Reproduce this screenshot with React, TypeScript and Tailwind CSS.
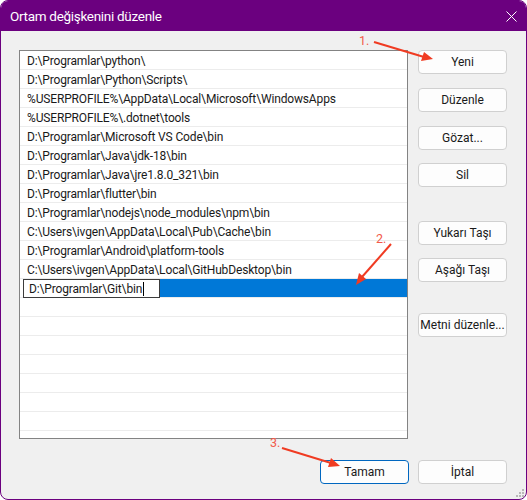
const PATHS = [
  "D:\\Programlar\\python\\",
  "D:\\Programlar\\Python\\Scripts\\",
  "%USERPROFILE%\\AppData\\Local\\Microsoft\\WindowsApps",
  "%USERPROFILE%\\.dotnet\\tools",
  "D:\\Programlar\\Microsoft VS Code\\bin",
  "D:\\Programlar\\Java\\jdk-18\\bin",
  "D:\\Programlar\\Java\\jre1.8.0_321\\bin",
  "D:\\Programlar\\flutter\\bin",
  "D:\\Programlar\\nodejs\\node_modules\\npm\\bin",
  "C:\\Users\\ivgen\\AppData\\Local\\Pub\\Cache\\bin",
  "D:\\Programlar\\Android\\platform-tools",
  "C:\\Users\\ivgen\\AppData\\Local\\GitHubDesktop\\bin",
];

function Btn({ label, className = "", primary = false }: { label: string; className?: string; primary?: boolean }) {
  return (
    <button
      className={
        "h-[24px] w-[89px] rounded-[4px] bg-[#fdfdfd] text-[12px] text-[#1a1a1a] flex items-center justify-center whitespace-nowrap " +
        (primary ? "border border-[#0067c0] " : "border border-[#d0d0d0] ") +
        className
      }
    >
      {label}
    </button>
  );
}

function Annotations() {
  const red = "#f03b22";
  return (
    <svg className="absolute left-0 top-0 pointer-events-none" width="527" height="500" viewBox="0 0 527 500">
      <text x="359" y="45" fontSize="12.5" fill="#f25a4a" fontFamily="Roboto, sans-serif">1.</text>
      <line x1="374" y1="42" x2="424" y2="57" stroke={red} strokeWidth="2" />
      <polygon points="433,59 421,61 424,52" fill={red} />
      <text x="376" y="243" fontSize="12.5" fill="#f25a4a" fontFamily="Roboto, sans-serif">2.</text>
      <line x1="391" y1="244" x2="362" y2="277" stroke={red} strokeWidth="2" />
      <polygon points="356,285 359,273 366,279" fill={red} />
      <text x="270" y="447" fontSize="12.5" fill="#f25a4a" fontFamily="Roboto, sans-serif">3.</text>
      <line x1="282" y1="448" x2="331" y2="463" stroke={red} strokeWidth="2" />
      <polygon points="340,466 328,467 331,458" fill={red} />
    </svg>
  );
}

export default function App() {
  return (
    <div className="relative w-[527px] h-[500px] bg-white" style={{ fontFamily: "Roboto, sans-serif" }}>
      <div className="w-[527px] h-[500px] border border-[#6b007f] rounded-[8px] overflow-hidden flex flex-col bg-[#f0f0f0]">
        <div className="h-[30px] bg-[#6b007f] flex items-center justify-between pl-[9px] pr-[9px] shrink-0">
          <span className="text-white text-[13.5px] tracking-[-0.3px]">Ortam değişkenini düzenle</span>
          <svg width="11" height="11" viewBox="0 0 11 11">
            <path d="M0.5 0.5 L10.5 10.5 M10.5 0.5 L0.5 10.5" stroke="white" strokeWidth="1" />
          </svg>
        </div>
        <div className="flex-1 pl-[18px] pr-[19px] pt-[19px] flex flex-col">
          <div className="flex gap-[10px]">
            <div className="w-[389px] h-[389px] border border-[#838383] bg-white overflow-hidden">
              {PATHS.map((p) => (
                <div key={p} className="h-[19px] border-b border-[#ececec] pl-[7px] pt-px text-[12px] tracking-[-0.15px] text-[#1a1a1a] leading-[18px] whitespace-nowrap">
                  {p}
                </div>
              ))}
              <div className="h-[19px] border-b border-[#ececec] flex pl-[3px]">
                <div className="w-[137px] h-[19px] border border-[#3c3c3c] bg-white pl-[5px] text-[12px] tracking-[-0.15px] text-[#1a1a1a] flex items-center">
                  <span>D:\Programlar\Git\bin</span>
                  <span className="w-px h-[14px] bg-black ml-px" />
                </div>
                <div className="flex-1 h-[18px] bg-[#0078d7]" />
              </div>
              {Array.from({ length: 8 }).map((_, i) => (
                <div key={i} className="h-[19px] border-b border-[#ececec]" />
              ))}
            </div>
            <div className="flex flex-col">
              <Btn label="Yeni" />
              <Btn label="Düzenle" className="mt-[14px]" />
              <Btn label="Gözat..." className="mt-[14px]" />
              <Btn label="Sil" className="mt-[13px]" />
              <Btn label="Yukarı Taşı" className="mt-[34px]" />
              <Btn label="Aşağı Taşı" className="mt-[13px]" />
              <Btn label="Metni düzenle..." className="mt-[31px]" />
            </div>
          </div>
          <div className="flex justify-end gap-[9px] mt-[21px]">
            <Btn label="Tamam" primary />
            <Btn label="İptal" />
          </div>
        </div>
      </div>
      <svg className="absolute right-[2px] bottom-[2px]" width="10" height="10" viewBox="0 0 10 10">
        {[
          [8, 2], [5, 5], [8, 5], [2, 8], [5, 8], [8, 8],
        ].map(([x, y], i) => (
          <rect key={i} x={x - 1} y={y - 1} width="2" height="2" fill="#b8b8b8" />
        ))}
      </svg>
      <Annotations />
    </div>
  );
}
